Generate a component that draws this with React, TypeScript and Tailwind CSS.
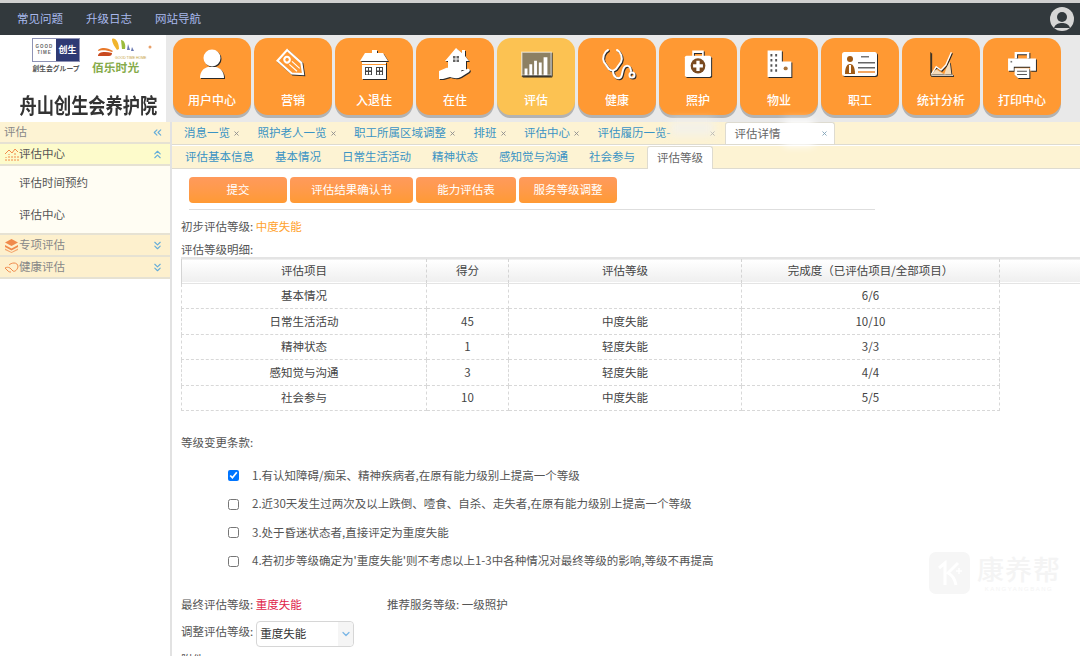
import { ChevronDown, ChevronsDown, ChevronsLeft, ChevronsUp, X } from 'lucide-react';
import type { ReactNode } from 'react';

const FONT = "font-['Noto_Sans_CJK_SC','Noto_Sans',sans-serif]";

// shrink a pictogram around the centre of its box
const fit = (sx: number, sy: number, node: ReactNode) => (
  <g transform={`translate(20 20) scale(${sx} ${sy}) translate(-20 -20)`}>{node}</g>
);

// white pictograms of the top menu, each on a 40x40 box
const icons: Record<string, ReactNode> = {
  user: (
    <g fill="#fff">
      <circle cx="20" cy="13" r="8.5" />
      <path d="M8 33c0-7 4-10 8-11h8c4 1 8 4 8 11z" />
    </g>
  ),
  tag: fit(
    0.8,
    0.8,
    <g transform="rotate(42 20 20)" fill="none" stroke="#fff" strokeWidth="2.600">
      <path d="M2 11h24l11 9-11 9H2z" fill="#ff9933" />
      <circle cx="10" cy="20" r="3.500" />
      <path d="M16 17.500h13M16 22.500h13" strokeWidth="1.500" />
    </g>,
  ),
  house: (
    <g fill="#fff">
      <rect x="18" y="5" width="5" height="3" />
      <path d="M11 8h18l5 8H6z" />
      <path d="M8 17h24v17H8z" />
      <g fill="#ff9933">
        <path d="M8 19h24v1H8z" />
      </g>
      <g fill="#444">
        <path d="M11 22h7v8h-7zM22 22h7v8h-7z" />
      </g>
      <g fill="#fff">
        <path d="M12 23h2v2.500h-2zM15 23h2v2.500h-2zM12 27h2v2.500h-2zM15 27h2v2.500h-2zM23 23h2v2.500h-2zM26 23h2v2.500h-2zM23 27h2v2.500h-2zM26 27h2v2.500h-2z" />
      </g>
    </g>
  ),
  hand: (
    <g fill="#fff">
      <path d="M21 3l6 5V5h3v6l4 5h-3v9H13v-9h-3z" />
      <path d="M18 11h6v6h-6z" fill="#666" />
      <path d="M20.5 11h1v6h-1zM18 13.500h6v1h-6z" fill="#fff" />
      <path d="M4 26l7-3c3-1 5 1 7 1h7c2 0 2 3 0 3h-6 6l7-3c2-1 4 1 2 3l-8 5c-4 2-8 1-11 0l-7 2H4z" />
    </g>
  ),
  chart: fit(
    0.95,
    0.85,
    <g>
      <rect x="5" y="5" width="31" height="27" fill="#8c8063" stroke="#fff" strokeOpacity="0.6" strokeWidth="1.500" />
      <path d="M8 24h3v8H8zM13 19h3v13h-3zM18 15h3v17h-3zM23 17h3v15h-3zM28 11h4v21h-4z" fill="#fff" />
      <path d="M5 33h31" stroke="#222" strokeWidth="1" />
    </g>,
  ),
  stethoscope: (
    <g fill="none" stroke="#fff" strokeWidth="2" strokeLinecap="round">
      <path d="M11 5C7 7 5 13 7 17l5 7c2 2 5 2 7 0l5-7c2-4 0-10-4-12" />
      <path d="M16 26c0 6 5 9 8 6 2-3 1-10 5-11 3-1 5 2 5 5" />
      <circle cx="35" cy="30" r="2.500" />
    </g>
  ),
  kit: fit(
    0.82,
    0.85,
    <g fill="#fff">
      <path d="M13 3h14v7h-2V6H15v4h-2z" />
      <rect x="4" y="9" width="32" height="25" rx="2" />
      <circle cx="20" cy="21" r="9" fill="#7a4a20" />
      <path d="M18 15h4v4h4v4h-4v4h-4v-4h-4v-4h4z" fill="#fff" />
    </g>,
  ),
  building: fit(
    0.95,
    0.85,
    <g fill="#fff">
      <path d="M8 3h15v13h10v18H8z" />
      <g fill="#555">
        <path d="M11 7h2v3h-2zM16 7h2v3h-2zM11 13h2v3h-2zM16 13h2v3h-2zM11 19h2v3h-2zM16 19h2v3h-2zM11 25h2v3h-2zM16 25h2v3h-2z" />
        <circle cx="27" cy="24" r="2.200" fill="#a9743a" />
      </g>
    </g>,
  ),
  card: (
    <g>
      <rect x="2" y="7" width="35" height="24" rx="2.500" fill="#fff" />
      <circle cx="10" cy="14" r="3" fill="#a05a14" />
      <path d="M5 29c0-7 2-10 5-10s5 3 5 10z" fill="#a05a14" />
      <path d="M9 20h2v8H9z" fill="#fff" />
      <path d="M21 11h8v1.500h-8z" fill="#777" />
      <path d="M18 17h17v1.500H18zM18 22h17v1.500H18z" fill="#666" />
      <path d="M18 26h17v2H18z" fill="#f3a661" />
    </g>
  ),
  line: fit(
    0.8,
    0.85,
    <g fill="none">
      <path d="M7 5v27h28" stroke="#6b4a22" strokeWidth="1.400" />
      <path d="M8 31l6-9 6 4 6-6 7-15" stroke="#fff" strokeWidth="1.600" />
      <path d="M8 31l6-6 5 3 5 3zM24 31l3-8 4-7 2 15z" fill="#f6dcb9" />
      <path d="M8 32h27" stroke="#fff" strokeWidth="1.200" />
    </g>,
  ),
  printer: fit(
    0.82,
    0.82,
    <g>
      <path d="M11 4h18v8h-3V7H14v5h-3z" fill="#fff" />
      <path d="M3 12h34v15h-7v-5H10v5H3z" fill="#fff" />
      <path d="M6 15h2v2H6z" fill="#777" />
      <path d="M11 24h18v12H15l-4-4z" fill="#fff" />
      <path d="M14 27h12v1.300H14zM14 31h12v1.300H14z" fill="#555" />
    </g>,
  ),
};

const menu = [
  ['用户中心', 'user'],
  ['营销', 'tag'],
  ['入退住', 'house'],
  ['在住', 'hand'],
  ['评估', 'chart'],
  ['健康', 'stethoscope'],
  ['照护', 'kit'],
  ['物业', 'building'],
  ['职工', 'card'],
  ['统计分析', 'line'],
  ['打印中心', 'printer'],
];

const openTabs = ['消息一览', '照护老人一览', '职工所属区域调整', '排班', '评估中心'];
const subTabs = ['评估基本信息', '基本情况', '日常生活活动', '精神状态', '感知觉与沟通', '社会参与'];

const rows = [
  ['基本情况', '', '', '6/6'],
  ['日常生活活动', '45', '中度失能', '10/10'],
  ['精神状态', '1', '轻度失能', '3/3'],
  ['感知觉与沟通', '3', '轻度失能', '4/4'],
  ['社会参与', '10', '中度失能', '5/5'],
];

const clauses = [
  '1.有认知障碍/痴呆、精神疾病者,在原有能力级别上提高一个等级',
  '2.近30天发生过两次及以上跌倒、噎食、自杀、走失者,在原有能力级别上提高一个等级',
  '3.处于昏迷状态者,直接评定为重度失能',
  "4.若初步等级确定为'重度失能'则不考虑以上1-3中各种情况对最终等级的影响,等级不再提高",
];

function Logos() {
  return (
    <div className="w-[166px] shrink-0 bg-white flex flex-col">
      <div className="flex gap-[12px] pt-[3px] pl-[32px] h-[50px]">
        <div className="flex flex-col items-center w-[48px]">
          <div className="flex w-[48px] h-[24px] border border-[#8f93b5]">
            <div className="w-[23px] flex flex-col items-center justify-center text-[4.500px] leading-[6px] tracking-[1px] font-bold text-[#666] font-['Liberation_Sans',sans-serif]">
              <span>GOOD</span>
              <span>TIME</span>
            </div>
            <div className="flex-1 bg-[#2e3a74] text-white text-[9px] font-bold flex items-center justify-center">创生</div>
          </div>
          <span className="text-[6.800px] leading-[9px] mt-[2px] font-bold text-[#555] whitespace-nowrap">創生会グループ</span>
        </div>
        <div className="flex flex-col w-[60px]">
          <svg width="60" height="18" viewBox="0 0 60 18">
            <path d="M6 18c0-4 6-5 14-3 0 2-1 3-3 3z" fill="#c8491f" />
            <path d="M6 13c0-3 8-5 15 0l-1 1C15 12 9 12 6 13z" fill="#e8792a" />
            <path d="M20 1c3-2 7 3 7 10l-2 1C23 9 20 5 20 1z" fill="#f1b52c" />
            <path d="M29 2c3 0 5 4 4 9l-3 0z" fill="#9bbb3c" />
            <path d="M36 6l2 6-3 0zM40 9l2 4-3 0z" fill="#6a79b3" />
            <circle cx="58" cy="9" r="1.500" fill="#e8a06a" />
          </svg>
          <span className="ml-[23px] text-[3.500px] leading-[4px] text-[#c5a13d] font-['Liberation_Sans',sans-serif] whitespace-nowrap">GOOD TIME HOME</span>
          <span className="text-[11.800px] leading-[14px] font-bold text-[#86ab4a] whitespace-nowrap">佰乐时光</span>
        </div>
      </div>
      <div className="text-[21px] leading-[30px] mt-[4px] ml-[5px] text-center font-bold text-[#333] whitespace-nowrap scale-x-[0.82]">舟山创生会养护院</div>
    </div>
  );
}

function MenuButton({ label, icon }: { label: string; icon: string }) {
  const active = label === '评估';
  return (
    <button
      className={`w-[78px] h-[77px] rounded-[14px] flex flex-col items-center text-white text-[12px] font-medium shadow-[0_3px_0_#b3b3b3] ${
        active ? 'bg-[#fcc252]' : 'bg-[#ff9933]'
      }`}
    >
      <svg width="40" height="40" viewBox="0 0 40 40" className="mt-[7px] drop-shadow-[1px_1px_0_#2a2a2a]">
        {icons[icon]}
      </svg>
      <span className="mt-[6px] leading-[17px]">{label}</span>
    </button>
  );
}

function Sidebar() {
  return (
    <aside className="w-[170px] shrink-0 text-[11.500px]">
      <div className="h-[22px] bg-[#fdf3d3] border-b-2 border-[#e6e2d3] flex items-center justify-between pl-[4px] pr-[6px] text-[#888]">
        <span>评估</span>
        <ChevronsLeft size={13} className="text-[#63acd9]" />
      </div>
      <div className="h-[22px] bg-[#fdfbcb] border-b-2 border-[#e6e2d3] flex items-center pl-[4px] pr-[6px] text-[#555]">
        <svg width="15" height="15" viewBox="0 0 15 15" fill="none" stroke="#f08a4b" strokeWidth="1">
          <path d="M1 7l4-4 3 3 3-4 3 3" />
          <path d="M2 14v-4M5 14V7M8 14v-5M11 14V6M14 14V8" strokeDasharray="2 1" />
        </svg>
        <span className="flex-1">评估中心</span>
        <ChevronsUp size={13} className="text-[#63acd9]" />
      </div>
      <div className="h-[69px] bg-[#fffdf3] border-b-2 border-[#e6e2d3] pl-[19px] pt-[8px] text-[#555] flex flex-col gap-[15px]">
        <span className="leading-[17px]">评估时间预约</span>
        <span className="leading-[17px]">评估中心</span>
      </div>
      <div className="h-[22px] bg-[#fdf0cd] border-b-2 border-[#e6e2d3] flex items-center pl-[4px] pr-[6px] text-[#888]">
        <svg width="15" height="15" viewBox="0 0 15 15" fill="#f08a4b">
          <path d="M7.500 1L14 4.500 7.500 8 1 4.500z" />
          <path d="M1 7l6.500 3.500L14 7v2l-6.500 3.500L1 9z" />
          <path d="M1 10.500L7.500 14 14 10.500v1.500L7.500 15 1 12z" opacity="0.7" />
        </svg>
        <span className="flex-1">专项评估</span>
        <ChevronsDown size={13} className="text-[#63acd9]" />
      </div>
      <div className="h-[22px] bg-[#fdf0cd] border-b-2 border-[#e6e2d3] flex items-center pl-[4px] pr-[6px] text-[#888]">
        <svg width="15" height="15" viewBox="0 0 15 15" fill="none" stroke="#f08a4b" strokeWidth="1">
          <path d="M1 8c2-1 3-1 5 0l3 3c2 1 4-1 5-4 0-3-2-4-4-4S6 4 5 5" />
          <path d="M1 8l3 3c1 1 2 1 3 1" />
        </svg>
        <span className="flex-1">健康评估</span>
        <ChevronsDown size={13} className="text-[#63acd9]" />
      </div>
    </aside>
  );
}

function Tabs() {
  return (
    <>
      <div className="relative h-[23px] bg-[#fdf3d3] border-b border-[#dedbd0] flex items-end pl-[3px] text-[11.500px] text-[#3a94c4]">
        {openTabs.map((t) => (
          <span key={t} className="flex items-center h-[22px] pl-[9px] pr-[8.500px] whitespace-nowrap">
            {t}
            <X size={7} strokeWidth={3} className="ml-[3px] text-[#8a8a8a]" />
          </span>
        ))}
        <span className="flex items-center h-[22px] pl-[9px] w-[145px] whitespace-nowrap">
          评估履历一览-
          <X size={7} strokeWidth={3} className="ml-auto mr-[18px] text-[#8a8a8a]" />
        </span>
        <span className="flex items-center h-[22px] w-[110px] ml-[-9px] pl-[9px] bg-white border border-b-0 border-[#dedbd0] rounded-t-[3px] text-[#666] whitespace-nowrap">
          评估详情
          <X size={7} strokeWidth={3} className="ml-auto mr-[6px] text-[#7d9fb5]" />
        </span>
        <div className="absolute left-[498px] top-[-2px] w-[44px] h-[16px] bg-[#f4f1e8] blur-[4px]" />
        <div className="absolute left-[612px] top-[-2px] w-[30px] h-[26px] bg-white blur-[4px]" />
      </div>
      <div className="h-[23px] mt-px bg-[#fdf3d3] border-b border-[#dedbd0] flex items-end text-[11.500px] text-[#3a94c4] pl-[3px]">
        {subTabs.map((t) => (
          <span key={t} className="h-[22px] px-[10px] mr-px flex items-center whitespace-nowrap">{t}</span>
        ))}
        <span className="h-[23px] px-[9px] ml-[1px] mb-[-1px] flex items-center bg-white border border-b-0 border-[#dedbd0] rounded-t-[3px] text-[#666]">评估等级</span>
      </div>
    </>
  );
}

function GradeTable() {
  return (
    <table className="w-full table-fixed border-collapse mt-[-1px] text-[11.500px] text-[#444] text-center">
      <colgroup>
        <col className="w-[245px]" />
        <col className="w-[82px]" />
        <col className="w-[233px]" />
        <col className="w-[258px]" />
        <col />
      </colgroup>
      <thead>
        <tr className="h-[25px] bg-gradient-to-b from-white to-[#efefef] border-t-2 border-b border-[#e4e4e4]">
          {['评估项目', '得分', '评估等级', '完成度（已评估项目/全部项目）', ''].map((h, i) => (
            <th key={i} className="font-normal border-l border-dashed border-[#d4d4d4] first:border-l-[#d4d4d4] first:border-solid">{h}</th>
          ))}
        </tr>
      </thead>
      <tbody>
        {rows.map((r) => (
          <tr key={r[0]} className="h-[25.500px]">
            {r.map((c, i) => (
              <td key={i} className="border border-dashed border-[#d8d8d8]">{c}</td>
            ))}
            <td />
          </tr>
        ))}
      </tbody>
    </table>
  );
}

function Watermark() {
  return (
    <div className="absolute right-[19px] bottom-[74px] flex items-center gap-[7px] text-[#f4f4f4]">
      <div className="w-[41px] h-[42px] rounded-[7px] bg-[#f6f6f6] flex items-center justify-center">
        <svg width="30" height="30" viewBox="0 0 30 30" fill="none" stroke="#fff" strokeWidth="3">
          <path d="M4 10l6-5v22" />
          <path d="M23 5L13 15c4 2 7 6 8 12" />
          <path d="M24 10v6M21 13h6" strokeWidth="1.500" />
        </svg>
      </div>
      <div className="flex flex-col items-center">
        <span className="text-[27px] leading-[33px] font-medium tracking-[1px]">康养帮</span>
        <span className="text-[6px] leading-[8px] tracking-[1.500px] font-['Liberation_Sans',sans-serif]">KANGYANGBANG</span>
      </div>
    </div>
  );
}

function Content() {
  return (
    <section className="flex-1 min-w-0 relative border-l-2 border-[#e2e2e2]">
      <Tabs />
      <div className="pl-[9px] text-[11.500px] text-[#555]">
        <div className="ml-[8px] w-[686px] pt-[8px] pb-[6px] border-b border-[#dedede] flex gap-[3px] text-white">
          {[
            ['提交', 'w-[98px]'],
            ['评估结果确认书', 'w-[123px]'],
            ['能力评估表', 'w-[100px]'],
            ['服务等级调整', 'w-[98px]'],
          ].map(([t, w]) => (
            <button key={t} className={`${w} h-[26px] rounded-[4px] bg-gradient-to-b from-[#ff9a5c] to-[#ff9a33]`}>{t}</button>
          ))}
        </div>
        <p className="mt-[8px] leading-[17px]">
          初步评估等级: <span className="text-[#ffa22e]">中度失能</span>
        </p>
        <p className="mt-[6px] leading-[17px]">评估等级明细:</p>
        <GradeTable />
        <p className="mt-[23px] leading-[17px]">等级变更条款:</p>
        <ul className="mt-[16px] pl-[47px] flex flex-col gap-[11.500px]">
          {clauses.map((c, i) => (
            <li key={c} className="flex items-center h-[17px] gap-[13px] whitespace-nowrap">
              <input type="checkbox" defaultChecked={i === 0} className="w-[11px] h-[11px] m-0 accent-[#0075ff]" />
              {c}
            </li>
          ))}
        </ul>
        <div className="mt-[26px] flex leading-[17px]">
          <span className="w-[206px]">
            最终评估等级: <span className="text-[#e0244a]">重度失能</span>
          </span>
          <span>推荐服务等级: 一级照护</span>
        </div>
        <div className="mt-[8px] flex items-center gap-[3px]">
          <span className="mb-[3px]">调整评估等级:</span>
          <div className="relative w-[98px] h-[26px] border border-[#d6d6d6] rounded-[4px] flex items-center pl-[3px] text-[#333]">
            重度失能
            <div className="absolute right-0 top-0 bottom-0 w-[15px] rounded-r-[4px] bg-[#f5f5f5] flex items-center justify-center">
              <ChevronDown size={12} strokeWidth={2.500} className="text-[#7ab6e6]" />
            </div>
          </div>
        </div>
        <p className="mt-[4px] leading-[17px]">附件</p>
      </div>
      <Watermark />
    </section>
  );
}

export default function App() {
  return (
    <div className={`h-[656px] w-[1080px] overflow-hidden bg-white ${FONT}`}>
      <div className="h-[3px] bg-[#d0d0d0]" />
      <header className="h-[32px] bg-[#32393d] flex items-center pl-[17px] pr-[6px] gap-[23px] text-[11.500px] text-[#a9b9ee]">
        <span>常见问题</span>
        <span>升级日志</span>
        <span>网站导航</span>
        <div className="ml-auto w-[24px] h-[24px] rounded-full bg-[#d6d6d6] overflow-hidden">
          <svg width="24" height="24" viewBox="0 0 24 24" fill="#32393d">
            <circle cx="12" cy="10" r="5" />
            <path d="M4 21c1-4 5-5 8-5s7 1 8 5z" />
          </svg>
        </div>
      </header>
      <div className="h-[87px] flex bg-[#e9e9e9]">
        <Logos />
        <nav className="flex gap-[3px] pl-[7px] pt-[3px]">
          {menu.map(([label, icon]) => (
            <MenuButton key={label} label={label} icon={icon} />
          ))}
        </nav>
      </div>
      <main className="flex">
        <Sidebar />
        <Content />
      </main>
    </div>
  );
}
